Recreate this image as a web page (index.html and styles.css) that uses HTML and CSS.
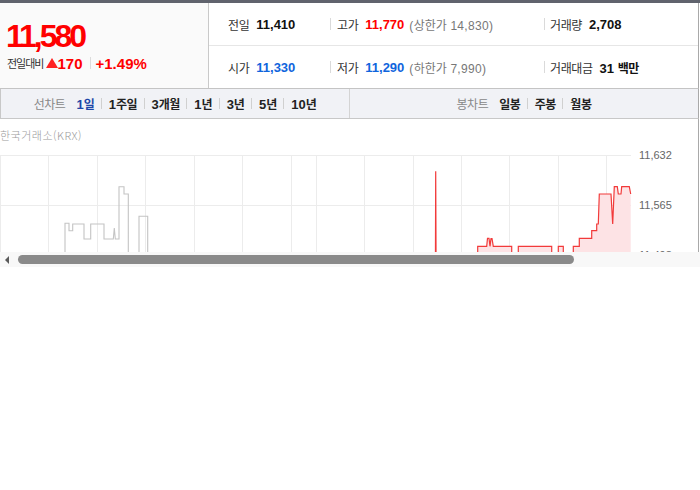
FILE: index.html
```html
<!DOCTYPE html>
<html lang="ko">
<head>
<meta charset="utf-8">
<title>시세</title>
<link rel="stylesheet" href="styles.css">
</head>
<body>
<div class="page">
  <div class="summary">
    <div class="now">
      <div class="price">11,580</div>
      <div class="change">
        <span class="chg-label">전일대비</span>
        <span class="tri"></span>
        <span class="chg-val">170</span>
        <span class="vsep"></span>
        <span class="chg-val">+1.49%</span>
      </div>
    </div>
    <div class="stats">
      <div class="row">
        <div class="cell c1"><span class="k">전일</span><span class="v">11,410</span></div>
        <div class="cell c2"><span class="k">고가</span><span class="v red">11,770</span><span class="lim">(<span class="kr">상한가</span> 14,830)</span></div>
        <div class="cell c3"><span class="k">거래량</span><span class="v">2,708</span></div>
      </div>
      <div class="row">
        <div class="cell c1"><span class="k">시가</span><span class="v blue">11,330</span></div>
        <div class="cell c2"><span class="k">저가</span><span class="v blue">11,290</span><span class="lim">(<span class="kr">하한가</span> 7,990)</span></div>
        <div class="cell c3"><span class="k">거래대금</span><span class="v">31 <span class="kr">백만</span></span></div>
      </div>
    </div>
  </div>

  <div class="tabs">
    <div class="tab-group">
      <span class="tab-label">선차트</span>
      <span class="tab on">1<span class="kr">일</span></span><span class="tsep"></span>
      <span class="tab">1<span class="kr">주일</span></span><span class="tsep"></span>
      <span class="tab">3<span class="kr">개월</span></span><span class="tsep"></span>
      <span class="tab">1<span class="kr">년</span></span><span class="tsep"></span>
      <span class="tab">3<span class="kr">년</span></span><span class="tsep"></span>
      <span class="tab">5<span class="kr">년</span></span><span class="tsep"></span>
      <span class="tab">10<span class="kr">년</span></span>
    </div>
    <div class="tab-group right">
      <span class="tab-label">봉차트</span>
      <span class="tab kr">일봉</span><span class="tsep"></span>
      <span class="tab kr">주봉</span><span class="tsep"></span>
      <span class="tab kr">월봉</span>
    </div>
  </div>

  <div class="chart">
    <div class="src">한국거래소(KRX)</div>
    <svg class="plot" width="698" height="120" viewBox="0 0 698 120">
      <g stroke="#ececec" stroke-width="1" fill="none">
        <line x1="0" y1="6.5" x2="631" y2="6.5"/>
        <line x1="0" y1="56.5" x2="631" y2="56.5"/>
        <line x1="0" y1="106.5" x2="631" y2="106.5"/>
        <line x1="0.5" y1="6" x2="0.5" y2="120"/>
        <line x1="48.5" y1="6" x2="48.5" y2="120"/>
        <line x1="97.5" y1="6" x2="97.5" y2="120"/>
        <line x1="145.5" y1="6" x2="145.5" y2="120"/>
        <line x1="194.5" y1="6" x2="194.5" y2="120"/>
        <line x1="242.5" y1="6" x2="242.5" y2="120"/>
        <line x1="291.5" y1="6" x2="291.5" y2="120"/>
        <line x1="316.5" y1="6" x2="316.5" y2="120"/>
        <line x1="364.5" y1="6" x2="364.5" y2="120"/>
        <line x1="413.5" y1="6" x2="413.5" y2="120"/>
        <line x1="461.5" y1="6" x2="461.5" y2="120"/>
        <line x1="509.5" y1="6" x2="509.5" y2="120"/>
        <line x1="558.5" y1="6" x2="558.5" y2="120"/>
        <line x1="606.5" y1="6" x2="606.5" y2="120"/>
      </g>
      <g fill="none" stroke="#c4c4c4" stroke-width="1.1">
        <path d="M65 120 V74.3 H69 V81.7 H72.7 V75 H84 V90 H90.7 V75 H104 V90 H113.3 L114.3 79 L115.3 90 H119 V37.7 H124 V45 H128.3 V120"/>
        <path d="M139 120 V67.3 H147.7 V120"/>
      </g>
      <g fill="#fde3e5" stroke="none">
        <path d="M477.7 120 V97.3 H486.7 L487.5 89.3 H489 L490 97.3 L491 89.5 H492 L493.3 97.3 H511.7 V120 Z"/>
        <path d="M518.3 120 V97.3 H551.7 V120 Z"/>
        <path d="M558.3 120 V97.3 H563.3 V120 Z"/>
        <path d="M573.3 120 V97.3 H579.3 V89.3 H591.7 V81.7 H596.7 V75 H598.3 L599.3 45 H611 L612.7 75 L614.3 37.7 H617.3 L618.3 45 H621 L621.7 37.7 H629.3 L630.7 45 V120 Z"/>
      </g>
      <g fill="none" stroke="#f23a3a" stroke-width="1.2">
        <path d="M435.4 120 L435.7 22.3 L436.1 120"/>
        <path d="M477.7 120 V97.3 H486.7 L487.5 89.3 H489 L490 97.3 L491 89.5 H492 L493.3 97.3 H511.7 V120"/>
        <path d="M518.3 120 V97.3 H551.7 V120"/>
        <path d="M558.3 120 V97.3 H563.3 V120"/>
        <path d="M573.3 120 V97.3 H579.3 V89.3 H591.7 V81.7 H596.7 V75 H598.3 L599.3 45 H611 L612.7 75 L614.3 37.7 H617.3 L618.3 45 H621 L621.7 37.7 H629.3 L630.7 45"/>
      </g>
      <g class="axis">
        <text x="639" y="10">11,632</text>
        <text x="639" y="60">11,565</text>
        <text x="639" y="110">11,498</text>
      </g>
    </svg>
  </div>

  <div class="hscroll">
    <span class="arrow"></span>
    <span class="thumb"></span>
  </div>
</div>
</body>
</html>
```

FILE: styles.css
```css
html, body {
  margin: 0;
  padding: 0;
  background: #fff;
}

body {
  font-family: "Liberation Sans", Arial, "Noto Sans CJK KR", sans-serif;
  color: #222;
}

.kr {
  font-family: "Noto Sans CJK KR", sans-serif;
}

.page {
  width: 700px;
  border-top: 3px solid #60636d;
}

/* ---------- summary ---------- */
.summary {
  display: flex;
  width: 698px;
  height: 85px;
  border-bottom: 1px solid #c4c4c4;
  border-right: 1px solid #a9a9a9;
}

.now {
  width: 202px;
  padding: 15px 0 0 6px;
  background: #fafafa;
  border-right: 1px solid #c9c9c9;
}

.price {
  margin-left: 0;
  font-size: 32px;
  line-height: 36px;
  font-weight: bold;
  letter-spacing: -3px;
  color: #f00;
}

.change {
  display: flex;
  align-items: center;
  height: 18px;
}

.chg-label {
  font-family: "Noto Sans CJK KR", sans-serif;
  font-size: 11px;
  letter-spacing: -1px;
  color: #333;
  margin-left: 1px;
}

.tri {
  width: 0;
  height: 0;
  margin: 0 -1px 1px 3px;
  border-left: 6px solid transparent;
  border-right: 6px solid transparent;
  border-bottom: 10px solid #f22;
}

.chg-val {
  font-size: 15px;
  font-weight: bold;
  color: #f00;
}

.vsep {
  width: 1px;
  height: 12px;
  margin: 0 5px 0 7px;
  background: #dcdcdc;
}

.stats {
  flex: 1;
  display: flex;
  flex-direction: column;
}

.row {
  display: flex;
  align-items: center;
  height: 42px;
}

.row + .row {
  border-top: 1px solid #e6e6e6;
}

.cell {
  display: flex;
  align-items: center;
  position: relative;
  white-space: nowrap;
}

.c1 {
  width: 102px;
  padding-left: 19px;
}

.c2 {
  width: 207px;
  padding-left: 7px;
}

.c3 {
  flex: 1;
  padding-left: 6px;
}

.c2::before,
.c3::before {
  content: "";
  position: absolute;
  left: 0;
  top: 50%;
  width: 1px;
  height: 12px;
  margin-top: -6px;
  background: #dadada;
}

.k {
  font-family: "Noto Sans CJK KR", sans-serif;
  font-size: 12px;
  letter-spacing: -0.4px;
  color: #333;
  margin-right: 7px;
}

.v {
  font-size: 13px;
  font-weight: bold;
  color: #111;
}

.v .kr {
  font-size: 12px;
  letter-spacing: -0.5px;
}

.red {
  color: #f00;
}

.blue {
  color: #1065dd;
}

.lim {
  margin-left: 5px;
  font-size: 12px;
  letter-spacing: 0.3px;
  color: #777;
}

.lim .kr {
  letter-spacing: 0;
}

/* ---------- tabs ---------- */
.tabs {
  display: flex;
  width: 697px;
  height: 29px;
  background: #f1f2f6;
  border-left: 1px solid #c8c8c8;
  border-right: 1px solid #a9a9a9;
  border-bottom: 1px solid #c8c8c8;
}

.tab-group {
  flex: 1;
  display: flex;
  align-items: center;
  justify-content: center;
}

.tab-group.right {
  border-left: 1px solid #d4d4d4;
}

.tab-label {
  font-family: "Noto Sans CJK KR", sans-serif;
  font-size: 12px;
  letter-spacing: -0.5px;
  color: #888;
  margin-right: 11px;
}

.tab {
  font-size: 13px;
  font-weight: bold;
  color: #222;
}

.tab .kr,
.tab.kr {
  font-size: 12px;
  letter-spacing: -0.5px;
}

.tab.on {
  color: #1d46a8;
}

.tsep {
  width: 1px;
  height: 11px;
  margin: 0 7px 0 6.5px;
  background: #d0d0d0;
}

/* ---------- chart ---------- */
.chart {
  width: 698px;
  height: 133px;
  overflow: hidden;
  border-right: 1px solid #a9a9a9;
}

.src {
  height: 30px;
  font-family: "Noto Sans CJK KR", sans-serif;
  font-weight: 300;
  font-size: 11px;
  letter-spacing: 0.5px;
  line-height: 33px;
  color: #9a9a9a;
}

.plot {
  display: block;
}

.axis text {
  font-family: "Liberation Sans", Arial, sans-serif;
  font-size: 11px;
  fill: #666;
}

/* ---------- scrollbar ---------- */
.hscroll {
  display: flex;
  align-items: center;
  width: 700px;
  height: 15px;
  background: #f8f8f8;
}

.arrow {
  width: 0;
  height: 0;
  margin-left: 5px;
  border-top: 4px solid transparent;
  border-bottom: 4px solid transparent;
  border-right: 4px solid #5a5a5a;
}

.thumb {
  width: 556px;
  height: 9px;
  margin-left: 9px;
  border-radius: 5px;
  background: #8a8a8a;
}
```
